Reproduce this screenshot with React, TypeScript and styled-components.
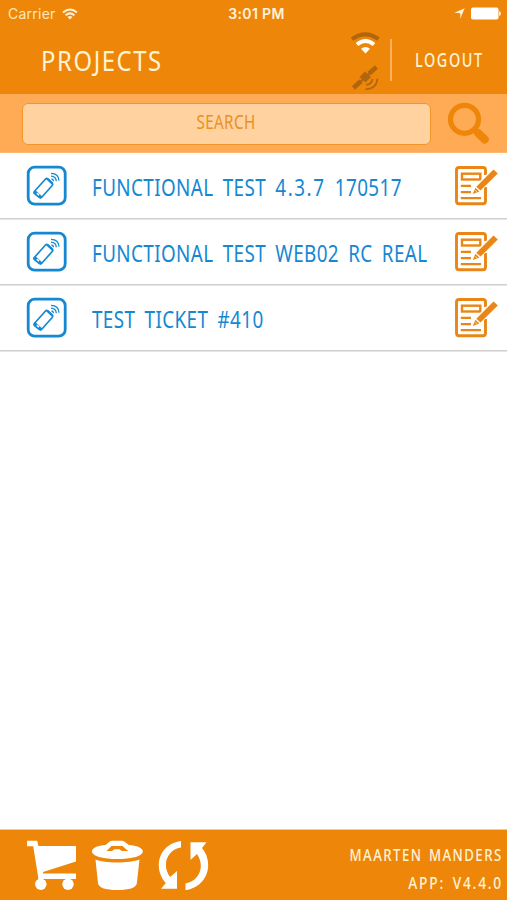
import React from 'react';
import styled, { createGlobalStyle } from 'styled-components';

const ORANGE = '#ee8609';
const BLUE = '#1588d2';
const CREAM = '#fff3d6';

const GlobalStyle = createGlobalStyle`
  * { box-sizing: border-box; }
  body { margin: 0; background: #fff; }
`;

const Screen = styled.div`
  width: 507px;
  height: 900px;
  display: flex;
  flex-direction: column;
  overflow: hidden;
  background: #fff;
  font-family: "Noto Sans", sans-serif;
`;

const Condensed = styled.span<{
  $size: number;
  $scale: number;
  $spacing?: number;
  $words?: number;
  $origin?: string;
  $weight?: number;
}>`
  display: inline-block;
  white-space: nowrap;
  line-height: 1;
  font-size: ${p => p.$size}px;
  font-weight: ${p => p.$weight ?? 400};
  letter-spacing: ${p => p.$spacing ?? 0}px;
  word-spacing: ${p => p.$words ?? 0}px;
  transform: scaleX(${p => p.$scale});
  transform-origin: ${p => p.$origin ?? 'left'} center;
`;

const Version = styled.span`
  letter-spacing: 2px;
`;

const Header = styled.header`
  height: 94px;
  flex: none;
  background: ${ORANGE};
  color: ${CREAM};
`;

const StatusBar = styled.div`
  height: 28px;
  padding: 0 6px 1px 8px;
  display: grid;
  grid-template-columns: 1fr auto 1fr;
  align-items: center;
  font-family: Inter, sans-serif;
  font-size: 14px;
  color: #ffe6bd;
`;

const StatusSide = styled.div<{ $end?: boolean }>`
  display: flex;
  align-items: center;
  gap: 6px;
  letter-spacing: 0.25px;
  justify-content: ${p => (p.$end ? 'flex-end' : 'flex-start')};
`;

const Clock = styled.div`
  font-weight: 600;
  font-size: 14px;
  color: #fff3dc;
  letter-spacing: 0.35px;
  padding-left: 4px;
`;

const TitleBar = styled.div`
  height: 66px;
  display: flex;
  padding-left: 41px;
`;

const Title = styled.h1`
  margin: 0;
  width: 309px;
  padding: 18px 0 0 0;
  font-size: 28px;
  line-height: 1;
  font-weight: 400;
`;

const Signals = styled.div`
  width: 31px;
  padding-top: 4px;
  display: flex;
  flex-direction: column;
  gap: 10px;
`;

const Divider = styled.div`
  width: 2px;
  height: 42px;
  margin: 11px 0 0 9px;
  background: #fbb25c;
`;

const Logout = styled.button`
  border: 0;
  padding: 0;
  margin: 22px 0 0 23px;
  width: 90px;
  height: 20px;
  background: none;
  color: ${CREAM};
  font-family: inherit;
  text-align: left;
  line-height: 1;
`;

const SearchBar = styled.div`
  height: 59px;
  flex: none;
  display: flex;
  background: #ffaa55;
  border-bottom: 1px solid #ffb871;
  padding: 9px 16px 0 22px;
`;

const SearchField = styled.div`
  width: 409px;
  height: 42px;
  border: 1.5px solid #f0962b;
  border-radius: 6px;
  background: #ffd29f;
  color: #ea8f24;
  display: flex;
  justify-content: center;
  padding-top: 9px;
`;

const SearchIcon = styled.svg`
  margin: -1px 0 0 16px;
`;

const List = styled.main`
  flex: 1;
`;

const Row = styled.div`
  height: 66px;
  display: flex;
  border-bottom: 1px solid #cfcfcf;
  box-shadow: 0 1px 0 #e6e6e6;
  padding-left: 26px;
  color: ${BLUE};
`;

const RowIcon = styled.svg`
  flex: none;
  margin-top: 12px;
`;

const RowLabel = styled.div`
  width: 387px;
  padding: 22px 0 0 25px;
  line-height: 1;
`;

const Footer = styled.footer`
  height: 71px;
  flex: none;
  display: flex;
  justify-content: space-between;
  background: ${ORANGE};
  border-top: 1px solid #f8c78c;
  padding: 10px 4px 0 26px;
`;

const Tools = styled.div`
  display: flex;
  gap: 15px;
`;

const Account = styled.div`
  display: flex;
  flex-direction: column;
  align-items: flex-end;
  gap: 11px;
  padding-top: 6px;
  color: ${CREAM};
`;

const StatusWifi = () => (
  <svg width="16" height="12" viewBox="0 0 16 12" fill="none" stroke="#fff0d6" strokeWidth="2">
    <path d="M1 4.5Q8-1.5 15 4.5" />
    <path d="M3.6 7.3Q8 3.5 12.4 7.3" />
    <path d="M5.5 9Q8 7 10.5 9L8 11.5Z" fill="#fff0d6" stroke="none" />
  </svg>
);

const WifiIcon = () => (
  <svg width="31" height="23" viewBox="0 0 31 23" fill="none">
    <path d="M2 7.2Q15.5-2.5 28.5 7.2" stroke="#b1660c" strokeWidth="4" />
    <path d="M7 12.5Q15.5 5.5 24 12.5" stroke="#fff" strokeWidth="4" />
    <path d="M11 16.8Q15.5 13.4 20 16.8L15.5 21.5Z" fill="#fff" />
  </svg>
);

const SatelliteIcon = () => (
  <svg width="31" height="26" viewBox="0 0 31 26" fill="none" stroke="#b1660c">
    <path d="M3.5 23L11 16M19 8.5L26.5 2" strokeWidth="4.6" />
    <path d="M9 18L22 6" strokeWidth="2" />
    <path d="M9.5 12L15 6.5L21 12L15.5 17.5Z" fill="#b1660c" stroke="none" />
    <path d="M16 20Q21.5 19.5 22.5 14" strokeWidth="1.7" />
    <path d="M15.5 24.3Q26.5 24 27.5 13.5" strokeWidth="1.7" />
  </svg>
);

const PhoneIcon = () => (
  <RowIcon width="41" height="41" viewBox="0 0 41 41" fill="none" stroke={BLUE}>
    <rect x="2.2" y="2.2" width="37" height="37" rx="6.5" strokeWidth="2.8" />
    <path d="M8.3 26.5L19.5 14Q20.5 13 21.8 14L26.2 18Q27.4 19.2 26.2 20.5L15.5 32.5Q14.5 33.6 13.2 32.4L8.3 28.3Q7.5 27.5 8.3 26.5Z" strokeWidth="1.7" />
    <path d="M9.5 25.5L16 31.5L14.2 33L8 28Z" fill={BLUE} strokeWidth=".5" />
    <path d="M10.8 28.2l2.2 1.9" stroke="#fff" strokeWidth="1.5" />
    <path d="M21.2 13.8L26.5 18.8" strokeWidth="2.2" />
    <path d="M25.5 14Q27.3 14.2 27.5 16.2M25 11.2Q30 11.3 30.3 16.2M25 8.3Q32.7 8.5 33 15.7" strokeWidth="1.3" />
  </RowIcon>
);

const NoteIcon = () => (
  <RowIcon width="44" height="41" viewBox="0 0 44 41" fill="none" stroke="#e98615">
    <path d="M31.5 10V5Q31.5 2.5 29 2.5H5Q2.5 2.5 2.5 5V36Q2.5 38.8 5 38.8H29Q31.5 38.8 31.5 36V22" strokeWidth="2.9" />
    <rect x="8" y="8.7" width="18.3" height="5.8" strokeWidth="2.4" />
    <path d="M6.8 20.8H17M6.8 27.2H17M6.8 33.2H27" strokeWidth="2.3" />
    <path d="M21 23L39.5 4.2L43.2 8.2L24.8 26.7L19 28.5Z" fill="#fff" stroke="#fff" strokeWidth="2.5" />
    <path d="M22.3 21.8L39.5 4.4L43.8 8.6L26.5 25.6Z" fill="#e98615" stroke="none" />
    <path d="M21.4 22.7L25.4 26.5L18.8 28.9Z" fill="#e98615" stroke="none" />
    <path d="M21.5 25.4l1.2 1.1" stroke="#fff" strokeWidth="1" />
  </RowIcon>
);

const CartIcon = () => (
  <svg width="51" height="51" viewBox="0 0 51 51" fill="#fff">
    <path d="M1 .8H11.2L12.4 6H50V21.5L17 32V33.5H50V39H12.5L7.2 6.2H1Z" />
    <path d="M14 37V42M41.8 37V42" stroke="#fff" strokeWidth="3" />
    <circle cx="14.8" cy="44.3" r="5.7" />
    <circle cx="42" cy="44.3" r="5.7" />
  </svg>
);

const BinIcon = () => (
  <svg width="51" height="51" viewBox="0 0 51 51" fill="#fff">
    <path d="M0 11.5C0 7.8 6 5.8 13.5 5.1L17.5 1.7Q18.7.7 20 .7H30Q31.4.7 32.5 1.7L37 5.1C44.5 5.8 50.8 7.8 50.8 11.5C50.8 21.5 0 21.5 0 11.5Z" />
    <path d="M14.5 11.1L19.5 6H30.5L36 11.1H29.8L27.5 9.2H22.5L20 11.1Z" fill={ORANGE} />
    <path d="M3.5 19.5C12 23.5 38 23.5 47.5 19.5L44.8 43.5Q43.5 50 25.3 50Q7.5 50 6 43.5Z" />
  </svg>
);

const SyncIcon = () => (
  <svg width="51" height="51" viewBox="0 0 51 51" fill="#fff">
    <path d="M23 1V7.5C9.5 9.5 3 25 12.2 37L19 31V48.7H3L7.8 43C-5.5 28.5.5 4 23 1Z" />
    <path d="M27.5 50V43.5C41 41.5 47.5 26.5 39 14L32.5 20V2.3H48.5L44 8C56.5 23 49.5 47 27.5 50Z" />
  </svg>
);

const PROJECTS = [
  { id: 1, label: <>FUNCTIONAL TEST <Version>4.3.7</Version> 170517</> },
  { id: 2, label: <>FUNCTIONAL TEST WEB02 RC REAL</> },
  { id: 3, label: <>TEST TICKET #410</> },
];

export default function App() {
  return (
    <Screen>
      <GlobalStyle />
      <Header>
        <StatusBar>
          <StatusSide>Carrier <StatusWifi /></StatusSide>
          <Clock>3:01 PM</Clock>
          <StatusSide $end>
            <svg width="11" height="11" viewBox="0 0 11 11"><path d="M.3 4.8L10.7.3L6.2 10.7V5.2Z" fill="#fff0d6" /></svg>
            <svg width="30" height="13" viewBox="0 0 30 13" fill="#fff">
              <rect x="0" y=".5" width="27.5" height="12" rx="2" />
              <path d="M28.2 4Q29.8 4.5 29.8 6.5Q29.8 8.5 28.2 9Z" />
            </svg>
          </StatusSide>
        </StatusBar>
        <TitleBar>
          <Title><Condensed $size={28} $scale={0.85} $spacing={1.9}>PROJECTS</Condensed></Title>
          <Signals><WifiIcon /><SatelliteIcon /></Signals>
          <Divider />
          <Logout><Condensed $size={19.5} $scale={0.74} $spacing={2.1} $weight={500}>LOGOUT</Condensed></Logout>
        </TitleBar>
      </Header>
      <SearchBar>
        <SearchField><Condensed $size={19} $scale={0.8} $spacing={0.5} $origin="center">SEARCH</Condensed></SearchField>
        <SearchIcon width="44" height="44" viewBox="0 0 44 44" fill="none" stroke={ORANGE}>
          <circle cx="17.5" cy="17.3" r="14" strokeWidth="5.2" />
          <path d="M27.5 27.5L31 31" strokeWidth="5.5" />
          <path d="M31 31L37.8 37.5" strokeWidth="8" strokeLinecap="round" />
        </SearchIcon>
      </SearchBar>
      <List>
        {PROJECTS.map(p => (
          <Row key={p.id}>
            <PhoneIcon />
            <RowLabel><Condensed $size={24} $scale={0.785} $spacing={0.5} $words={5}>{p.label}</Condensed></RowLabel>
            <NoteIcon />
          </Row>
        ))}
      </List>
      <Footer>
        <Tools><CartIcon /><BinIcon /><SyncIcon /></Tools>
        <Account>
          <Condensed $size={17} $scale={0.775} $spacing={1.9} $words={2} $weight={500} $origin="right">MAARTEN MANDERS</Condensed>
          <Condensed $size={17} $scale={0.81} $spacing={2.2} $words={3} $weight={500} $origin="right">APP: V4.4.0</Condensed>
        </Account>
      </Footer>
    </Screen>
  );
}
